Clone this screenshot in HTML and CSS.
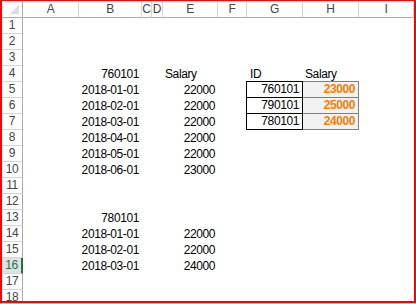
FILE: index.html
```html
<!DOCTYPE html>
<html lang="en">
<head>
    <meta charset="UTF-8">
    <title>Salary lookup</title>
    <link rel="stylesheet" href="styles.css">
</head>
<body>
    <div class="sheet">
        <div class="row head">
            <div class="corner"></div>
            <div>A</div><div>B</div><div>C</div><div>D</div><div>E</div>
            <div>F</div><div>G</div><div>H</div><div>I</div>
        </div>
        <div class="row"><div class="rh">1</div></div>
        <div class="row"><div class="rh">2</div></div>
        <div class="row"><div class="rh">3</div></div>
        <div class="row">
            <div class="rh">4</div>
            <div class="c cb r">760101</div>
            <div class="c ce">Salary</div>
            <div class="c cg">ID</div>
            <div class="c ch">Salary</div>
        </div>
        <div class="row">
            <div class="rh">5</div>
            <div class="c cb r">2018-01-01</div>
            <div class="c ce r">22000</div>
            <div class="c cg r id first">760101</div>
            <div class="c ch r calc first">23000</div>
        </div>
        <div class="row">
            <div class="rh">6</div>
            <div class="c cb r">2018-02-01</div>
            <div class="c ce r">22000</div>
            <div class="c cg r id">790101</div>
            <div class="c ch r calc">25000</div>
        </div>
        <div class="row">
            <div class="rh">7</div>
            <div class="c cb r">2018-03-01</div>
            <div class="c ce r">22000</div>
            <div class="c cg r id">780101</div>
            <div class="c ch r calc">24000</div>
        </div>
        <div class="row">
            <div class="rh">8</div>
            <div class="c cb r">2018-04-01</div>
            <div class="c ce r">22000</div>
        </div>
        <div class="row">
            <div class="rh">9</div>
            <div class="c cb r">2018-05-01</div>
            <div class="c ce r">22000</div>
        </div>
        <div class="row">
            <div class="rh">10</div>
            <div class="c cb r">2018-06-01</div>
            <div class="c ce r">23000</div>
        </div>
        <div class="row"><div class="rh">11</div></div>
        <div class="row"><div class="rh">12</div></div>
        <div class="row">
            <div class="rh">13</div>
            <div class="c cb r">780101</div>
        </div>
        <div class="row">
            <div class="rh">14</div>
            <div class="c cb r">2018-01-01</div>
            <div class="c ce r">22000</div>
        </div>
        <div class="row">
            <div class="rh">15</div>
            <div class="c cb r">2018-02-01</div>
            <div class="c ce r">22000</div>
        </div>
        <div class="row">
            <div class="rh selected">16</div>
            <div class="c cb r">2018-03-01</div>
            <div class="c ce r">24000</div>
        </div>
        <div class="row"><div class="rh">17</div></div>
        <div class="row"><div class="rh">18</div></div>
    </div>
</body>
</html>
```
FILE: styles.css
```css
body {
    margin: 0;
    font-family: "Liberation Sans", Arial, sans-serif;
    font-size: 12px;
    letter-spacing: -0.4px;
    color: #000;
    background: #fff;
}
.sheet {
    box-sizing: border-box;
    width: 416px;
    height: 303px;
    border: 2px solid #ff0000;
    border-top-width: 1px;
    overflow: hidden;
}
.row {
    display: grid;
    grid-template-columns: 21px 56px 63px 10px 11px 55px 29px 56px 56px 55px;
    height: 16px;
}
.row > div {
    box-sizing: border-box;
    white-space: nowrap;
}
.head {
    height: 17px;
}
.head > div {
    border-right: 1px solid #d5d5d5;
    border-bottom: 1px solid #ababab;
    text-align: center;
    line-height: 16px;
    color: #444;
}
.head > .corner {
    display: flex;
    justify-content: flex-end;
    align-items: flex-end;
    padding: 0 3px 3px 0;
    border-right-color: #ababab;
}
.corner::after {
    content: "";
    width: 9px;
    height: 9px;
    background: #dcdcdc;
    clip-path: polygon(100% 0, 100% 100%, 0 100%);
}
.rh {
    grid-column: 1;
    border-right: 1px solid #ababab;
    border-bottom: 1px solid #d5d5d5;
    text-align: center;
    line-height: 15px;
    color: #444;
}
.rh.selected {
    background: #e1e1e1;
    color: #217346;
    border-right: 2px solid #217346;
}
.c {
    line-height: 16px;
    padding: 0 3px 0 2px;
}
.r {
    text-align: right;
}
.cb { grid-column: 3; }
.ce { grid-column: 6; }
.cg { grid-column: 8; padding-left: 3px; }
.ch { grid-column: 9; }
.id {
    margin-left: -1px;
    border: 1px solid #000;
    border-top: none;
    line-height: 15px;
}
.calc {
    border-right: 1px solid #7f7f7f;
    border-bottom: 1px solid #7f7f7f;
    background: #f2f2f2;
    color: #fa7d00;
    font-weight: bold;
    line-height: 15px;
}
.first {
    margin-top: -1px;
    border-top: 1px solid #000;
    line-height: 15px;
}
.calc.first {
    border-top-color: #7f7f7f;
}
```
